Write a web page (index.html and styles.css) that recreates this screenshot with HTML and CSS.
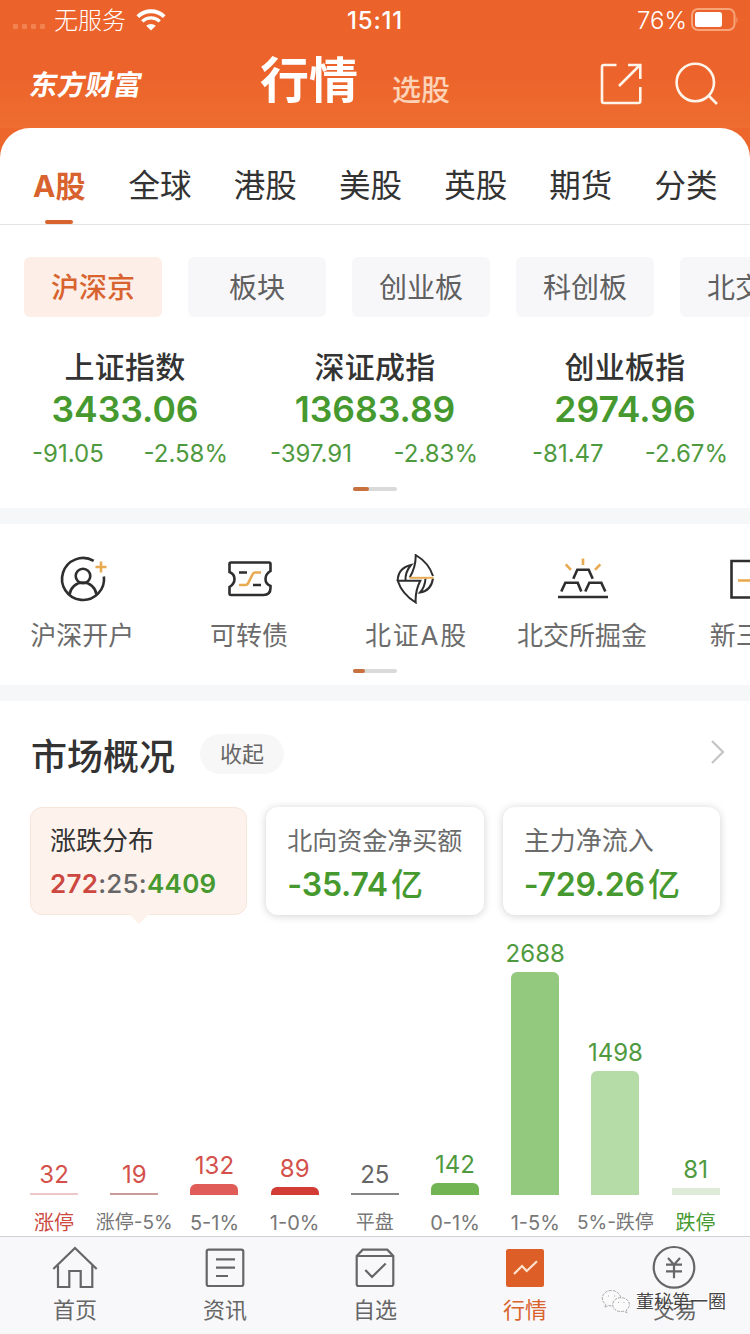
FILE: index.html
```html
<!DOCTYPE html>
<html lang="zh-CN">
<head>
  <meta charset="UTF-8">
  <title>行情</title>
  <link rel="stylesheet" href="styles.css">
</head>
<body>
  <header class="header">
    <div class="status-bar">
      <div class="status-left">
        <span class="signal"><i></i><i></i><i></i><i></i></span>
        <span class="carrier">无服务</span>
        <svg class="wifi" width="30" height="22" viewBox="0 0 30 22">
          <path d="M1.800 7.600a19 19 0 0 1 26.400 0" fill="none" stroke="#fff" stroke-width="3.800"/>
          <path d="M6.300 12.400a12.400 12.400 0 0 1 17.400 0" fill="none" stroke="#fff" stroke-width="3.400"/>
          <path d="M10.200 16.800a7 7 0 0 1 9.600 0L15 21.400z" fill="#fff"/>
        </svg>
      </div>
      <span class="clock">15:11</span>
      <div class="status-right">
        <span class="percent">76%</span>
        <svg width="48" height="24" viewBox="0 0 48 24">
          <rect x="1" y="1" width="42.500" height="21" rx="6" fill="none" stroke="#f8a47a" stroke-width="2"/>
          <rect x="4" y="4" width="27" height="15" rx="2.500" fill="#fff"/>
          <path d="M45.500 8.500q2 3.500 0 7z" fill="#f8a47a"/>
        </svg>
      </div>
    </div>
    <div class="title-bar">
      <span class="logo">东方财富</span>
      <div class="titles">
        <h1>行情</h1>
        <span class="sub-title">选股</span>
      </div>
      <div class="header-icons">
        <svg width="44" height="44" viewBox="0 0 44 44">
          <path d="M17.500 3H5a2 2 0 0 0-2 2v34a2 2 0 0 0 2 2h34.300a2 2 0 0 0 2-2V25M20 24L41 3M29 3h12.300v14"/>
        </svg>
        <svg width="46" height="44" viewBox="0 0 46 44">
          <circle cx="21.300" cy="20.500" r="18.700"/>
          <path d="M34.500 33.500L43 42"/>
        </svg>
      </div>
    </div>
  </header>

  <main class="sheet">
    <nav class="market-tabs">
      <a class="active">A股</a>
      <a>全球</a>
      <a>港股</a>
      <a>美股</a>
      <a>英股</a>
      <a>期货</a>
      <a>分类</a>
    </nav>

    <div class="chips">
      <span class="chip active">沪深京</span>
      <span class="chip">板块</span>
      <span class="chip">创业板</span>
      <span class="chip">科创板</span>
      <span class="chip">北交所</span>
    </div>

    <section class="indices">
      <div class="index">
        <h2>上证指数</h2>
        <strong>3433.06</strong>
        <p><span>-91.05</span><span>-2.58%</span></p>
      </div>
      <div class="index">
        <h2>深证成指</h2>
        <strong>13683.89</strong>
        <p><span>-397.91</span><span>-2.83%</span></p>
      </div>
      <div class="index">
        <h2>创业板指</h2>
        <strong>2974.96</strong>
        <p><span>-81.47</span><span>-2.67%</span></p>
      </div>
    </section>
    <div class="pager"><i></i></div>

    <div class="divider"></div>

    <section class="shortcuts">
      <div class="shortcut">
        <svg width="50" height="50" viewBox="0 0 50 50">
          <path d="M35.700 6.900A21 21 0 1 0 45.900 22.500"/>
          <circle cx="25" cy="22" r="7.300"/>
          <path d="M11.500 40.500a13.600 13.600 0 0 1 27 0"/>
          <path class="gold" d="M43 7.500v11M37.500 13h11"/>
        </svg>
        <span>沪深开户</span>
      </div>
      <div class="shortcut">
        <svg width="50" height="50" viewBox="0 0 50 50">
          <path d="M6 8.500h38q1.500 0 1.500 1.500v7q-5 3-5 8t5 7v2q0 7-7 7H6q-1.500 0-1.500-1.500V33q5-3 5-8t-5-7v-8q0-1.500 1.500-1.500z"/>
          <path d="M14 18.500h8M28 31h8"/>
          <path class="gold" d="M14 31h6.500q1.500 0 2.300-1.200l5-9.800q.8-1.500 2.300-1.500H36"/>
        </svg>
        <span>可转债</span>
      </div>
      <div class="shortcut">
        <svg class="thin" width="50" height="50" viewBox="0 0 50 50">
          <path d="M18.700 23.500Q25 13 24.700 1 38 9 42 22M29.300 26.700H6.700Q11 40 24.700 48.500 24 37 29.300 26.700z"/>
          <path d="M6.700 26.700Q7 14 20 11 14 18 14.500 26.700M42 24.500Q40 37 29 38.500 34 33 34.500 24.500"/>
          <path class="gold" d="M18.500 23.800h24"/>
        </svg>
        <span class="spaced">北证A股</span>
      </div>
      <div class="shortcut">
        <svg width="50" height="50" viewBox="0 0 50 50">
          <path d="M0 43h50M15.300 24.700l4-9h11.400l4 9M3.300 37.500l4-8.800h12.400l3.600 8.800M27.300 37.500l4-8.800h12l4 8.800"/>
          <path class="gold" d="M25 4.500V11M7.700 10.300L13 15.800M42.300 10.300L37 15.800"/>
        </svg>
        <span>北交所掘金</span>
      </div>
      <div class="shortcut">
        <svg width="50" height="50" viewBox="0 0 50 50">
          <path d="M6.500 7h36v36.500h-36z"/>
          <path class="gold" d="M13 26.500h22"/>
        </svg>
        <span>新三板</span>
      </div>
    </section>
    <div class="pager short"><i></i></div>

    <div class="divider"></div>

    <section class="overview">
      <div class="overview-head">
        <h2>市场概况</h2>
        <span class="toggle">收起</span>
        <svg class="more" width="16" height="26" viewBox="0 0 16 26">
          <path d="M2 2l11 11L2 24" fill="none" stroke="#c4c4c4" stroke-width="2.200"/>
        </svg>
      </div>

      <div class="cards">
        <div class="card selected">
          <h3>涨跌分布</h3>
          <p class="ratio"><b class="up">272</b>:25:<b class="down">4409</b></p>
        </div>
        <div class="card">
          <h3 class="tight">北向资金净买额</h3>
          <p class="amount">-35.74<span>亿</span></p>
        </div>
        <div class="card">
          <h3>主力净流入</h3>
          <p class="amount">-729.26<span>亿</span></p>
        </div>
      </div>

      <div class="chart">
        <div class="col red"><b>32</b><i class="bar limit-up flat" style="height:2px"></i><span class="up">涨停</span></div>
        <div class="col red"><b>19</b><i class="bar rise-5 flat" style="height:2px"></i><span>涨停-5%</span></div>
        <div class="col red"><b>132</b><i class="bar rise-1" style="height:11px"></i><span class="wide">5-1%</span></div>
        <div class="col red"><b>89</b><i class="bar rise-0" style="height:8px"></i><span class="wide">1-0%</span></div>
        <div class="col gray"><b>25</b><i class="bar even flat" style="height:2px"></i><span>平盘</span></div>
        <div class="col green"><b>142</b><i class="bar fall-0" style="height:12px"></i><span class="wide">0-1%</span></div>
        <div class="col green"><b>2688</b><i class="bar fall-1" style="height:223px"></i><span class="wide">1-5%</span></div>
        <div class="col green"><b>1498</b><i class="bar fall-5" style="height:124px"></i><span>5%-跌停</span></div>
        <div class="col green"><b>81</b><i class="bar limit-down flat" style="height:7px"></i><span class="down">跌停</span></div>
      </div>
    </section>
  </main>

  <nav class="tab-bar">
    <a>
      <svg width="50" height="50" viewBox="0 0 50 50">
        <path d="M3.300 26L25 5l21.700 21M8 22.500V44h11.300V28h11.400v16h11.600V22.500"/>
      </svg>
      <span>首页</span>
    </a>
    <a>
      <svg width="50" height="50" viewBox="0 0 50 50">
        <rect x="6.700" y="6.700" width="36.600" height="36.300" rx="2"/>
        <path d="M16 16.300h19M16 24.700h19M16 33h12"/>
      </svg>
      <span>资讯</span>
    </a>
    <a>
      <svg width="50" height="50" viewBox="0 0 50 50">
        <path d="M6.700 13l6-6.300h24.600l6 6.300v28a2 2 0 0 1-2 2H8.700a2 2 0 0 1-2-2zM6.700 13h36.600M15.300 27l6.700 7 13.700-13.500"/>
      </svg>
      <span>自选</span>
    </a>
    <a class="active">
      <svg width="50" height="50" viewBox="0 0 50 50">
        <rect x="6" y="6" width="38" height="38" rx="2.500" fill="#dd5f27" stroke="none"/>
        <path d="M14 31l8-8 4.700 5L37 18.300" stroke="#fde3cf"/>
      </svg>
      <span>行情</span>
    </a>
    <a>
      <svg width="50" height="50" viewBox="0 0 50 50">
        <circle cx="24" cy="24.300" r="20.300"/>
        <path d="M18 15l6 6.700 6-6.700M16 21.700h16M16 28.300h16M24 21.700v13.500"/>
      </svg>
      <span>交易</span>
    </a>
  </nav>

  <div class="watermark">
    <svg width="30" height="26" viewBox="0 0 30 26">
      <path d="M10.500 1.500c-5.200 0-9.200 3.400-9.200 7.700 0 2.500 1.300 4.600 3.400 6l-1 3.200 3.800-2c1 .3 2 .4 3 .4M19.700 8.500c-.9-4-4.600-7-9.200-7"/>
      <path d="M20 8.700c-4.800 0-8.300 3-8.300 6.900s3.500 7 8.300 7c1 0 2-.2 2.900-.5l3.200 1.800-.9-2.900c2-1.300 3.200-3.200 3.200-5.400 0-3.800-3.700-6.900-8.400-6.900z"/>
      <path d="M7.500 6.500v1M13.500 6.500v1M17.500 13v1M23 13v1"/>
    </svg>
    <span>董秘第一圈</span>
  </div>
</body>
</html>
```
FILE: styles.css
```css
* {
  box-sizing: border-box;
  margin: 0;
  padding: 0;
}
body {
  width: 750px;
  height: 1334px;
  overflow: hidden;
  position: relative;
  display: flex;
  flex-direction: column;
  background-color: #ed672d;
  color: #333;
  font-family: Inter, "Noto Sans CJK SC", sans-serif;
}
h1, h2, h3 {
  font-weight: 500;
}
i, b {
  font-style: normal;
  font-weight: 400;
}
svg {
  flex-shrink: 0;
}

/* header */
.header {
  height: 128px;
  flex-shrink: 0;
  background: linear-gradient(#eb622b 0%, #ec632b 55%, #ee6d30 100%);
  color: #fff;
}
.status-bar {
  height: 40px;
  display: grid;
  grid-template-columns: 1fr auto 1fr;
  align-items: center;
  padding: 0 11px 0 13px;
}
.status-left, .status-right {
  display: flex;
  align-items: center;
}
.signal {
  display: flex;
  gap: 4px;
  padding-top: 13px;
}
.signal i {
  width: 5px;
  height: 5px;
  border-radius: 1px;
  background-color: #f28350;
}
.carrier {
  margin-left: 9px;
  padding-top: 2px;
  font-size: 24px;
  line-height: 36px;
  font-weight: 300;
}
.wifi {
  margin-left: 10px;
}
.clock {
  margin-right: 2px;
  font-size: 24px;
  font-weight: 500;
  letter-spacing: 0.8px;
}
.clock, .percent {
  padding-top: 1px;
}
.status-right {
  justify-content: flex-end;
  gap: 4px;
}
.percent {
  font-size: 24px;
  font-weight: 300;
}
.title-bar {
  height: 88px;
  display: grid;
  grid-template-columns: 230px 1fr 120px;
  padding: 0 30px;
}
.logo {
  justify-self: start;
  align-self: start;
  margin-top: 24px;
  font-size: 28px;
  line-height: 42px;
  font-weight: 700;
  transform: skewX(-10deg);
}
.titles {
  display: flex;
}
.titles h1 {
  font-size: 49px;
  line-height: 82px;
  font-weight: 700;
}
.sub-title {
  margin-left: 34px;
  padding-top: 29px;
  font-size: 29px;
  line-height: 44px;
  font-weight: 500;
  color: #fdd3b8;
}
.header-icons {
  display: flex;
  justify-content: flex-end;
  gap: 31px;
  padding-top: 22px;
}
.header-icons svg {
  fill: none;
  stroke: #fff4ea;
  stroke-width: 2.6;
}

/* white sheet */
.sheet {
  height: 1108px;
  overflow: hidden;
  border-radius: 30px 30px 0 0;
  background-color: #fff;
}
.market-tabs {
  height: 97px;
  display: flex;
  padding-left: 11px;
  border-bottom: 1px solid #e4e4e4;
}
.market-tabs a {
  width: 105.2px;
  flex-shrink: 0;
  display: flex;
  flex-direction: column;
  align-items: center;
  justify-content: space-between;
  padding-top: 35px;
  font-size: 31.5px;
  line-height: 46px;
}
.market-tabs .active {
  width: 96.5px;
  font-size: 30px;
  font-weight: 700;
  color: #d8632f;
}
.market-tabs .active::after {
  content: "";
  width: 28px;
  height: 4px;
  border-radius: 2px;
  background-color: #d8632f;
}
.chips {
  display: flex;
  gap: 26px;
  padding: 32px 0 0 24px;
}
.chip {
  width: 138px;
  height: 60px;
  flex-shrink: 0;
  border-radius: 6px;
  background-color: #f7f7fa;
  color: #606060;
  font-size: 28px;
  line-height: 63px;
  text-align: center;
}
.chip.active {
  background-color: #fdeee7;
  color: #d8632f;
  font-weight: 500;
}

/* indices */
.indices {
  display: grid;
  grid-template-columns: repeat(3, 1fr);
  margin-top: 30px;
  text-align: center;
}
.index h2 {
  font-size: 30px;
  line-height: 40px;
  letter-spacing: 0.2px;
}
.index strong {
  display: block;
  padding-top: 1px;
  font-size: 35.5px;
  line-height: 43px;
  font-weight: 600;
  color: #46992f;
}
.index p {
  display: flex;
  justify-content: space-between;
  padding: 0 22px 0 32px;
  font-size: 24px;
  line-height: 45px;
  color: #4f9a3e;
}
.index:nth-child(2) p {
  padding-left: 20px;
}
.pager {
  width: 44px;
  height: 4px;
  margin: 11px auto 17px;
  border-radius: 2px;
  background-color: #dadada;
}
.pager i {
  display: block;
  width: 16px;
  height: 4px;
  border-radius: 2px;
  background-color: #c9703f;
}
.pager.short {
  margin: 11px auto 12px;
}
.pager.short i {
  width: 12px;
}
.divider {
  height: 16px;
  background-color: #f6f7f9;
}

/* shortcuts */
.shortcuts {
  display: flex;
  padding-top: 30px;
}
.shortcut {
  width: 166.6px;
  flex-shrink: 0;
  display: flex;
  flex-direction: column;
  align-items: center;
}
.shortcut svg {
  fill: none;
  stroke: #2e2e2e;
  stroke-width: 2.6;
}
.shortcut svg.thin {
  stroke-width: 2;
}
.shortcut .gold {
  stroke: #e9ab51;
}
.shortcut span {
  margin: 10px 2px 0 0;
  font-size: 26px;
  line-height: 44px;
  color: #6b6b6b;
  white-space: nowrap;
}
.shortcut .spaced {
  margin-right: 0;
  letter-spacing: 1.8px;
}

/* market overview */
.overview-head {
  display: flex;
  align-items: center;
  height: 106px;
  padding: 0 24px 0 31px;
}
.overview-head h2 {
  padding-bottom: 1px;
  font-size: 36px;
}
.toggle {
  width: 84px;
  margin-left: 25px;
  border-radius: 20px;
  background-color: #f7f7f7;
  color: #666;
  font-size: 22px;
  line-height: 40px;
  text-align: center;
}
.more {
  margin: 0 0 5px auto;
}
.cards {
  display: grid;
  grid-template-columns: repeat(3, 1fr);
  gap: 19px;
  padding: 0 30px;
}
.card {
  position: relative;
  height: 108px;
  padding: 14px 21px;
  border-radius: 12px;
  background-color: #fff;
  box-shadow: 0 1px 9px rgba(0, 0, 0, 0.18);
  white-space: nowrap;
}
.card h3 {
  font-size: 26px;
  line-height: 40px;
  font-weight: 400;
  color: #6b6b6b;
}
.card h3.tight {
  font-size: 25px;
}
.card.selected {
  background-color: #fdf2ec;
  border: 1px solid #f8e5da;
  box-shadow: none;
  padding: 13px 19px;
}
.card.selected h3 {
  color: #333;
}
.card.selected::after {
  content: "";
  position: absolute;
  left: 98px;
  top: 100%;
  border: 10px solid transparent;
  border-top-color: #fdf2ec;
  border-bottom: none;
}
.ratio {
  font-size: 26px;
  line-height: 46px;
  font-weight: 500;
  letter-spacing: 0.25px;
  color: #666;
}
.ratio b {
  font-weight: 600;
}
.amount {
  font-size: 32px;
  line-height: 47px;
  font-weight: 600;
  letter-spacing: -0.2px;
  color: #46992f;
}
.amount span {
  margin-left: 3px;
  font-weight: 500;
}
.up, .ratio .up {
  color: #cc4840;
}
.down, .ratio .down {
  color: #46992f;
}

/* distribution chart */
.chart {
  height: 321px;
  display: flex;
  padding: 0 14px;
}
.col {
  width: 80.2px;
  flex-shrink: 0;
  display: flex;
  flex-direction: column;
  align-items: center;
  justify-content: flex-end;
}
.col b {
  font-size: 24px;
  line-height: 36px;
}
.col span {
  height: 41px;
  padding-top: 15px;
  font-size: 19px;
  line-height: 26px;
  color: #777;
  white-space: nowrap;
}
.col .wide, .col .up, .col .down {
  font-size: 20px;
}
.col .up {
  color: #cc4840;
}
.col .down {
  color: #46992f;
}
.red b {
  color: #d4504a;
}
.gray b {
  color: #666;
}
.green b {
  color: #4f9a3e;
}
.bar {
  width: 48px;
  flex-shrink: 0;
  border-radius: 6px 6px 0 0;
}
.bar.flat {
  border-radius: 0;
}
.limit-up { background-color: #ecc9c8; }
.rise-5 { background-color: #c99b9b; }
.rise-1 { background-color: #e05c59; }
.rise-0 { background-color: #d33c35; }
.even { background-color: #888; }
.fall-0 { background-color: #71b454; }
.fall-1 { background-color: #93c97e; }
.fall-5 { background-color: #b5dba7; }
.limit-down { background-color: #dfebd9; }

/* bottom tab bar */
.tab-bar {
  height: 98px;
  display: flex;
  border-top: 1px solid #d2d2d4;
  background-color: #f8f8fa;
}
.tab-bar a {
  flex: 1;
  display: flex;
  flex-direction: column;
  align-items: center;
  padding-top: 6px;
  font-size: 22px;
  line-height: 35px;
  color: #666;
}
.tab-bar svg {
  fill: none;
  stroke: #666;
  stroke-width: 2.2;
}
.tab-bar .active {
  color: #d8632f;
}
.watermark {
  position: absolute;
  left: 601px;
  top: 1289px;
  display: flex;
  align-items: center;
  gap: 5px;
  font-size: 18px;
  line-height: 26px;
  color: #444;
  text-shadow: -1px -1px 0 #fff;
}
.watermark svg {
  fill: #fbfbfc;
  stroke: #aaa;
  stroke-dasharray: 3 1;
}
```
